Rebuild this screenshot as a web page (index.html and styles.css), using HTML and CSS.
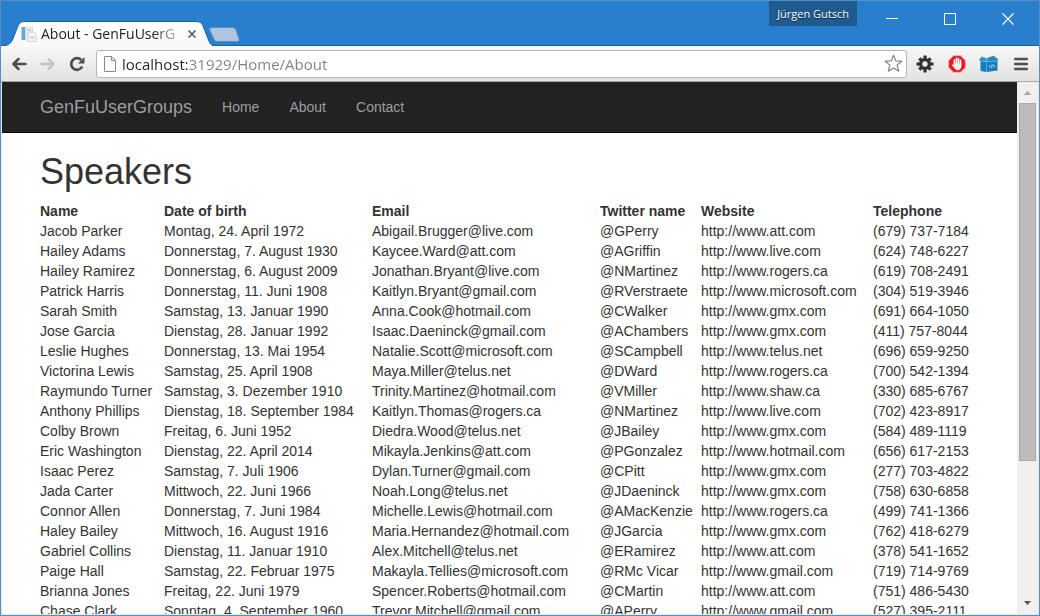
FILE: index.html
```html
<!DOCTYPE html>
<html lang="en">
<head>
<meta charset="utf-8">
<title>About - GenFuUserGroups</title>
<link rel="stylesheet" href="styles.css">
</head>
<body>
<div class="window">
  <header class="titlebar">
    <div class="tab">
      <svg class="tab-shape" viewBox="0 0 212 25" preserveAspectRatio="none" aria-hidden="true">
        <defs><linearGradient id="tabfill" x1="0" y1="0" x2="0" y2="1"><stop offset="0" stop-color="#fff"/><stop offset="1" stop-color="#f9f9f9"/></linearGradient></defs>
        <path d="M0 25C5 24.500 7 22 8.500 19L14.500 4Q16 .5 20 .5H195Q199 .5 200.500 4L206.500 19C208 23 209 24.500 212 25Z" fill="url(#tabfill)"/>
        <path d="M0 24.500C5 24 7 22 8.500 19L14.500 4Q16 .5 20 .5H195Q199 .5 200.500 4L206.500 19C208 23 209 24 212 24.500" fill="none" stroke="#1d5f9f" stroke-width="1"/>
      </svg>
      <svg class="favicon" width="16" height="16" viewBox="0 0 16 16" aria-hidden="true">
        <path d="M.5 1H4V14H.5z" fill="#63a9d6"/><path d="M4.500 1H11.500V14H4.500z" fill="#eef1f4" stroke="#d5dae0"/>
        <path d="M7 6H12.500L15 8.500V15.500H7z" fill="#f6f7f8" stroke="#ccd3da"/><path d="M6 4H10M9 11.500H13" stroke="#c3ccd5" stroke-width="2"/>
      </svg>
      <span class="tab-title">About - GenFuUserG</span>
      <button class="tab-close" aria-label="Close tab"><svg width="10" height="10" viewBox="0 0 10 10"><path d="M1.500 1.500L8.500 8.500M8.500 1.500L1.500 8.500" stroke="#5a5a5a" stroke-width="1.600"/></svg></button>
    </div>
    <button class="new-tab" aria-label="New tab"><svg width="31" height="15" viewBox="0 0 31 15"><path d="M3 .5H23.500Q26 .5 26.800 2.500L30 12Q30.600 14.500 28.500 14.500H8Q6 14.500 5 12.500L.8 3Q0 .5 3 .5Z" fill="#adc5de" stroke="#5b8fc4"/></svg></button>
    <button class="profile">Jürgen Gutsch</button>
    <div class="controls">
      <button aria-label="Minimize"><svg width="12" height="12" viewBox="0 0 12 12"><path d="M0 5.500H12" stroke="#fff"/></svg></button>
      <button aria-label="Maximize"><svg width="12" height="12" viewBox="0 0 12 12"><path d="M.5 .5H11.500V11.500H.5z" fill="none" stroke="#fff"/></svg></button>
      <button aria-label="Close"><svg width="12" height="12" viewBox="0 0 12 12"><path d="M.5 .5L11.500 11.500M11.500 .5L.5 11.500" stroke="#fff" stroke-width="1.200"/></svg></button>
    </div>
  </header>
  <div class="toolbar">
    <div class="history">
      <button aria-label="Back"><svg width="16" height="14" viewBox="0 0 16 14"><path d="M14.500 7H2.500M7.500 2L2.400 7L7.500 12" fill="none" stroke="#4d4d4d" stroke-width="2.500" stroke-linecap="round" stroke-linejoin="round"/></svg></button>
      <button aria-label="Forward"><svg width="16" height="14" viewBox="0 0 16 14"><path d="M1.500 7H13.500M8.500 2L13.600 7L8.500 12" fill="none" stroke="#c1c1c1" stroke-width="2.300" stroke-linecap="round" stroke-linejoin="round"/></svg></button>
      <button aria-label="Reload"><svg width="16" height="16" viewBox="0 0 16 16"><path d="M12.200 4A5.800 5.800 0 1 0 13.200 10.500" fill="none" stroke="#4d4d4d" stroke-width="2.700"/><path d="M15.500 1V7.500H9z" fill="#4d4d4d"/></svg></button>
    </div>
    <div class="omnibox">
      <svg width="12" height="16" viewBox="0 0 12 16" aria-hidden="true"><path d="M.5 .5H7.500L11.500 4.500V15.500H.5z" fill="#fafafa" stroke="#8a8a8a"/><path d="M7.500 .5V4.500H11.500" fill="none" stroke="#8a8a8a"/></svg>
      <input class="address" type="text" aria-label="Address" value="localhost:31929/Home/About">
      <button class="bookmark" aria-label="Bookmark this page"><svg width="19" height="19" viewBox="0 0 19 19"><path d="M9.500 1.200L11.700 6.900L17.800 7.200L13.100 11.100L14.700 17.200L9.500 13.900L4.300 17.200L5.900 11.100L1.200 7.200L7.300 6.900Z" fill="#fff" stroke="#828282" stroke-width="1.200" stroke-linejoin="round"/></svg></button>
    </div>
    <div class="extensions">
      <button aria-label="Settings"><svg width="18" height="18" viewBox="-9 -9 18 18"><g fill="#333"><circle r="6"/><path d="M-1.600 -8.500H1.600V8.500H-1.600z"/><path d="M-1.600 -8H1.600V8H-1.600z" transform="rotate(45)"/><path d="M-1.600 -8.500H1.600V8.500H-1.600z" transform="rotate(90)"/><path d="M-1.600 -8H1.600V8H-1.600z" transform="rotate(135)"/></g><circle r="2.700" fill="#eee"/></svg></button>
      <button aria-label="Ad blocker"><svg width="18" height="18" viewBox="0 0 18 18"><path d="M5.600 .6H12.400L17.400 5.600V12.400L12.400 17.400H5.600L.6 12.400V5.600Z" fill="#ee1a1d" stroke="#eeb0b0" stroke-width="1"/><path d="M6.500 9V5M8.500 8.500V3.400M10.500 8.500V3.800M12.500 9.500V5.300" stroke="#fff" stroke-width="1.600" stroke-linecap="round"/><path d="M5.700 8.500H13.300V12Q12.700 15 9.500 15.300Q7.500 15 6.300 13L3.800 10.200Q4.200 9 5.700 10.200Z" fill="#fff"/></svg></button>
      <button aria-label="Package tools"><svg width="20" height="18" viewBox="0 0 20 18"><path d="M1.500 6L7.500 6.700V17L1.500 16zM7.500 6.700L18.500 6V15.500L7.500 17z" fill="#167dba"/><path d="M0 5L3 1.500L7.500 3.500L8.500 6.700L1.500 6zM8 3L14.500 .8L19.500 4.500L17.500 6.500L8.500 6.700z" fill="#2189c5"/><path d="M3 1.500L7.500 6.700V17M7.500 6.700L9 3.500M8 6.700L18.500 6M1.500 6L7.500 6.700" fill="none" stroke="#74b7dd" stroke-width=".7"/><path d="M11.500 9.800L10.200 11.300L11.500 12.800M14.500 9.500L16 11L14.500 12.500M13.500 9.300L12.500 13" fill="none" stroke="#d3eaf7" stroke-width=".8"/></svg></button>
      <button aria-label="Menu"><svg width="14" height="14" viewBox="0 0 14 14"><path d="M1.200 2H12.800M1.200 7H12.800M1.200 12H12.800" stroke="#505050" stroke-width="2.600" stroke-linecap="round"/></svg></button>
    </div>
  </div>
  <div class="viewport">
    <div class="page">
      <nav class="navbar">
        <div class="container nav-row">
          <a class="brand" href="#">GenFuUserGroups</a>
          <a href="#">Home</a>
          <a href="#">About</a>
          <a href="#">Contact</a>
        </div>
      </nav>
      <main class="container">
        <h1>Speakers</h1>
        <table class="speakers">
          <colgroup><col class="c-name"><col class="c-birth"><col class="c-email"><col class="c-twitter"><col class="c-site"><col></colgroup>
          <thead><tr><th>Name</th><th>Date of birth</th><th>Email</th><th>Twitter name</th><th>Website</th><th>Telephone</th></tr></thead>
          <tbody>
            <tr><td>Jacob Parker</td><td>Montag, 24. April 1972</td><td>Abigail.Brugger@live.com</td><td>@GPerry</td><td>http://www.att.com</td><td>(679) 737-7184</td></tr>
            <tr><td>Hailey Adams</td><td>Donnerstag, 7. August 1930</td><td>Kaycee.Ward@att.com</td><td>@AGriffin</td><td>http://www.live.com</td><td>(624) 748-6227</td></tr>
            <tr><td>Hailey Ramirez</td><td>Donnerstag, 6. August 2009</td><td>Jonathan.Bryant@live.com</td><td>@NMartinez</td><td>http://www.rogers.ca</td><td>(619) 708-2491</td></tr>
            <tr><td>Patrick Harris</td><td>Donnerstag, 11. Juni 1908</td><td>Kaitlyn.Bryant@gmail.com</td><td>@RVerstraete</td><td>http://www.microsoft.com</td><td>(304) 519-3946</td></tr>
            <tr><td>Sarah Smith</td><td>Samstag, 13. Januar 1990</td><td>Anna.Cook@hotmail.com</td><td>@CWalker</td><td>http://www.gmx.com</td><td>(691) 664-1050</td></tr>
            <tr><td>Jose Garcia</td><td>Dienstag, 28. Januar 1992</td><td>Isaac.Daeninck@gmail.com</td><td>@AChambers</td><td>http://www.gmx.com</td><td>(411) 757-8044</td></tr>
            <tr><td>Leslie Hughes</td><td>Donnerstag, 13. Mai 1954</td><td>Natalie.Scott@microsoft.com</td><td>@SCampbell</td><td>http://www.telus.net</td><td>(696) 659-9250</td></tr>
            <tr><td>Victorina Lewis</td><td>Samstag, 25. April 1908</td><td>Maya.Miller@telus.net</td><td>@DWard</td><td>http://www.rogers.ca</td><td>(700) 542-1394</td></tr>
            <tr><td>Raymundo Turner</td><td>Samstag, 3. Dezember 1910</td><td>Trinity.Martinez@hotmail.com</td><td>@VMiller</td><td>http://www.shaw.ca</td><td>(330) 685-6767</td></tr>
            <tr><td>Anthony Phillips</td><td>Dienstag, 18. September 1984</td><td>Kaitlyn.Thomas@rogers.ca</td><td>@NMartinez</td><td>http://www.live.com</td><td>(702) 423-8917</td></tr>
            <tr><td>Colby Brown</td><td>Freitag, 6. Juni 1952</td><td>Diedra.Wood@telus.net</td><td>@JBailey</td><td>http://www.gmx.com</td><td>(584) 489-1119</td></tr>
            <tr><td>Eric Washington</td><td>Dienstag, 22. April 2014</td><td>Mikayla.Jenkins@att.com</td><td>@PGonzalez</td><td>http://www.hotmail.com</td><td>(656) 617-2153</td></tr>
            <tr><td>Isaac Perez</td><td>Samstag, 7. Juli 1906</td><td>Dylan.Turner@gmail.com</td><td>@CPitt</td><td>http://www.gmx.com</td><td>(277) 703-4822</td></tr>
            <tr><td>Jada Carter</td><td>Mittwoch, 22. Juni 1966</td><td>Noah.Long@telus.net</td><td>@JDaeninck</td><td>http://www.gmx.com</td><td>(758) 630-6858</td></tr>
            <tr><td>Connor Allen</td><td>Donnerstag, 7. Juni 1984</td><td>Michelle.Lewis@hotmail.com</td><td>@AMacKenzie</td><td>http://www.rogers.ca</td><td>(499) 741-1366</td></tr>
            <tr><td>Haley Bailey</td><td>Mittwoch, 16. August 1916</td><td>Maria.Hernandez@hotmail.com</td><td>@JGarcia</td><td>http://www.gmx.com</td><td>(762) 418-6279</td></tr>
            <tr><td>Gabriel Collins</td><td>Dienstag, 11. Januar 1910</td><td>Alex.Mitchell@telus.net</td><td>@ERamirez</td><td>http://www.att.com</td><td>(378) 541-1652</td></tr>
            <tr><td>Paige Hall</td><td>Samstag, 22. Februar 1975</td><td>Makayla.Tellies@microsoft.com</td><td>@RMc Vicar</td><td>http://www.gmail.com</td><td>(719) 714-9769</td></tr>
            <tr><td>Brianna Jones</td><td>Freitag, 22. Juni 1979</td><td>Spencer.Roberts@hotmail.com</td><td>@CMartin</td><td>http://www.att.com</td><td>(751) 486-5430</td></tr>
            <tr><td>Chase Clark</td><td>Sonntag, 4. September 1960</td><td>Trevor.Mitchell@gmail.com</td><td>@APerry</td><td>http://www.gmail.com</td><td>(527) 395-2111</td></tr>
          </tbody>
        </table>
      </main>
    </div>
    <div class="scrollbar" aria-hidden="true">
      <svg class="arrow" viewBox="0 0 17 21"><path d="M5 13L8.500 9L12 13Z" fill="#a3a3a3"/></svg>
      <div class="track"><div class="thumb"></div></div>
      <svg class="arrow" viewBox="0 0 17 21"><path d="M5 8H12L8.500 12Z" fill="#505050"/></svg>
    </div>
  </div>
</div>
</body>
</html>
```
FILE: styles.css
```css
* { box-sizing: border-box; }
body { margin: 0; font-family: "Liberation Sans", Arial, sans-serif; font-size: 14px; line-height: 20px; color: #333; }
button { border: 0; padding: 0; background: none; font: inherit; display: flex; align-items: center; justify-content: center; }
svg { display: block; flex: none; }

.window { height: 100vh; display: flex; flex-direction: column; border: 1px solid #5a8dc3; background: #287fce; overflow: hidden; }

.titlebar { flex: none; height: 45px; display: flex; align-items: flex-end; padding: 0 2px 0 3px; border-bottom: 1px solid #1c62a8; }
.tab { position: relative; display: flex; align-items: center; width: 210px; height: 25px; margin-bottom: -1px; padding-left: 17px; }
.tab-shape { position: absolute; inset: 0; width: 100%; height: 100%; }
.favicon, .tab-title, .tab-close { position: relative; }
.tab-title { width: 139px; margin-left: 4px; overflow: hidden; white-space: nowrap; font-family: "Open Sans", "Noto Sans", sans-serif; font-size: 14px; color: #222; -webkit-mask-image: linear-gradient(to right, #000 112px, transparent 145px); mask-image: linear-gradient(to right, #000 112px, transparent 145px); }
.tab-close { width: 14px; height: 14px; margin-left: 5px; }
.new-tab { margin: 0 auto 3px -5px; }
.profile { align-self: flex-start; height: 25px; margin-right: 6px; padding: 0 8px; background: #1f5a91; color: #fff; font: 11px/15px "Open Sans", "Noto Sans", sans-serif; text-shadow: 0 1px 1px #123; }
.controls { display: flex; align-self: flex-start; }
.controls button { width: 58px; height: 36px; }

.toolbar { flex: none; height: 36px; display: flex; align-items: center; padding: 0 2px 0 3px; background: linear-gradient(#f8f8f8, #e2e2e2); border-bottom: 1px solid #a8a8a8; }
.history, .extensions { display: flex; }
.history { margin-right: 5px; }
.history button { width: 29px; height: 28px; }
.extensions { margin-left: 2px; }
.extensions button { width: 32px; height: 28px; }
.omnibox { flex: 1; height: 28px; display: flex; align-items: center; padding: 0 3px 0 7px; background: #fff; border: 1px solid #b5b5b5; border-radius: 3px; }
.address { flex: 1; min-width: 0; margin: 0 6px; padding: 0; border: 0; outline: 0; font: 15px/24px "Open Sans", "Noto Sans", sans-serif; color: transparent; background: linear-gradient(to right, #222 65px, #808080 65px); -webkit-background-clip: text; background-clip: text; }

.viewport { flex: 1; min-height: 0; display: flex; border: solid #e8e8e8; border-width: 0 1px 1px; background: #fff; }
.page { flex: 1; min-width: 0; overflow: hidden; }
.container { max-width: 969px; margin: 0 auto; padding: 0 15px; }
.navbar { background: #222; border-bottom: 1px solid #080808; }
.nav-row { display: flex; height: 50px; align-items: center; }
.nav-row a { padding: 0 15px; color: #9d9d9d; text-decoration: none; }
.nav-row .brand { padding-left: 0; font-size: 18px; }
h1 { margin: 19px 0 10px; font-size: 36px; line-height: 39px; font-weight: 500; }
.speakers { width: 100%; table-layout: fixed; border-collapse: collapse; }
.speakers th, .speakers td { padding: 0; text-align: left; white-space: nowrap; }
.c-name { width: 124px; }
.c-birth { width: 208px; }
.c-email { width: 228px; }
.c-twitter { width: 101px; }
.c-site { width: 172px; }

.scrollbar { flex: none; width: 21px; display: flex; flex-direction: column; padding: 0 2px; background: #f0f0f0; }
.arrow { width: 17px; height: 21px; }
.track { flex: 1; }
.thumb { height: 73%; background: #bcbcbc; border: 1px solid #a8a8a8; }
```
